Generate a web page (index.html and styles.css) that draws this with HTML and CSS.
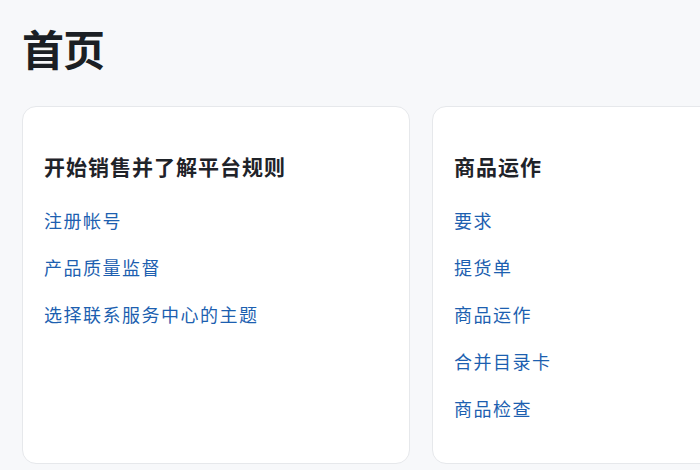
FILE: index.html
```html
<!DOCTYPE html>
<html lang="zh-CN">
<head>
    <meta charset="UTF-8">
    <meta name="viewport" content="width=device-width, initial-scale=1.0">
    <title>首页</title>
    <link rel="stylesheet" href="styles.css">
</head>
<body>
    <div class="page">
        <h1 class="page-title">首页</h1>
        <div class="cards">
            <div class="card">
                <h3 class="card-title">开始销售并了解平台规则</h3>
                <a class="card-link" href="#">注册帐号</a>
                <a class="card-link" href="#">产品质量监督</a>
                <a class="card-link" href="#">选择联系服务中心的主题</a>
            </div>
            <div class="card">
                <h3 class="card-title">商品运作</h3>
                <a class="card-link" href="#">要求</a>
                <a class="card-link" href="#">提货单</a>
                <a class="card-link" href="#">商品运作</a>
                <a class="card-link" href="#">合并目录卡</a>
                <a class="card-link" href="#">商品检查</a>
            </div>
        </div>
    </div>
</body>
</html>
```

FILE: styles.css
```css
body, html{
    margin: 0;
    height: 100%;
    background-color: #f7f8fa;
    font-family: "Noto Sans CJK SC", "Noto Sans", sans-serif;
    overflow: hidden;
}
.page{
    padding: 20px 0 0 22px;
}
.page-title{
    margin: 0;
    font-size: 42px;
    line-height: 56px;
    font-weight: 700;
    letter-spacing: -1px;
    color: #1b1f24;
}
.cards{
    display: flex;
    gap: 22px;
    margin-top: 30px;
}
.card{
    flex: 0 0 388px;
    height: 358px;
    box-sizing: border-box;
    background-color: #ffffff;
    border: 1px solid #e6e8eb;
    border-radius: 14px;
    padding: 44px 20px 0 21px;
    display: flex;
    flex-direction: column;
    align-items: flex-start;
}
.card-title{
    margin: 0 0 26px 0;
    font-size: 21px;
    line-height: 30px;
    font-weight: 700;
    letter-spacing: 1px;
    color: #1f2329;
}
.card-link{
    font-size: 18px;
    line-height: 26px;
    letter-spacing: 1.5px;
    color: #1d5fb0;
    text-decoration: none;
    margin-bottom: 21px;
}
```
